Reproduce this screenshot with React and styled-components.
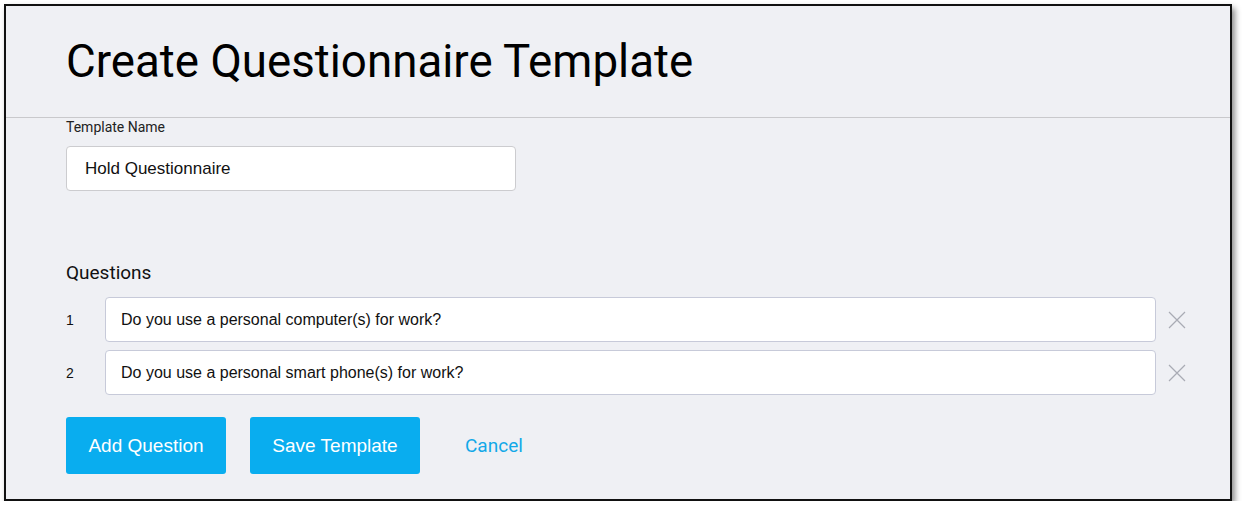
import React from 'react';
import styled, { createGlobalStyle } from 'styled-components';

const GlobalStyle = createGlobalStyle`
  html, body {
    margin: 0;
    padding: 0;
    background: #ffffff;
  }
  body {
    font-family: Roboto, "Liberation Sans", Arial, sans-serif;
  }
`;

const Page = styled.div`
  padding: 4px 0 0 4px;
`;

const Frame = styled.div`
  width: 1224px;
  height: 493px;
  border: 2px solid #111;
  background: #eff0f4;
  box-shadow: 3px 4px 6px rgba(0, 0, 0, 0.45);
  display: flex;
  flex-direction: column;
`;

const Header = styled.header`
  height: 111px;
  border-bottom: 1px solid #c9c9cc;
  display: flex;
  align-items: center;
  padding: 0 60px;
`;

const Title = styled.h1`
  margin: 0;
  font-family: Roboto, sans-serif;
  font-weight: 400;
  font-size: 45.7px;
  color: #000;
`;

const Body = styled.div`
  padding: 0 20px 0 60px;
  display: flex;
  flex-direction: column;
`;

const Label = styled.label`
  display: block;
  font-family: Roboto, sans-serif;
  font-size: 14px;
  color: #222;
  margin-top: 1px;
  line-height: 16px;
`;

const NameInput = styled.div`
  box-sizing: border-box;
  margin-top: 11px;
  width: 450px;
  height: 45px;
  border: 1px solid #cccccf;
  border-radius: 4px;
  background: #fff;
  display: flex;
  align-items: center;
  padding-left: 18px;
  font-family: "Liberation Sans", Arial, sans-serif;
  font-size: 17px;
  color: #111;
`;

const SectionTitle = styled.h2`
  margin: 71px 0 0;
  font-family: Roboto, sans-serif;
  font-weight: 400;
  font-size: 19px;
  line-height: 22px;
  color: #111;
`;

const QuestionList = styled.div`
  margin-top: 13px;
  display: flex;
  flex-direction: column;
  gap: 8px;
`;

const QuestionRow = styled.div`
  display: flex;
  align-items: center;
`;

const Number = styled.span`
  width: 39px;
  flex-shrink: 0;
  font-family: "Liberation Sans", Arial, sans-serif;
  font-size: 14px;
  color: #111;
`;

const QuestionInput = styled.div`
  box-sizing: border-box;
  flex-shrink: 0;
  width: 1051px;
  height: 45px;
  border: 1px solid #c7cad9;
  border-radius: 4px;
  background: #fff;
  display: flex;
  align-items: center;
  padding-left: 15px;
  font-family: "Liberation Sans", Arial, sans-serif;
  font-size: 16px;
  color: #111;
`;

const RemoveButton = styled.button`
  margin-left: 11px;
  flex-shrink: 0;
  width: 20px;
  height: 20px;
  padding: 0;
  border: none;
  background: none;
  display: flex;
  align-items: center;
  justify-content: center;
  cursor: pointer;
`;

const Actions = styled.div`
  margin-top: 22px;
  display: flex;
  align-items: center;
  gap: 24px;
`;

const PrimaryButton = styled.button`
  height: 57px;
  width: ${p => p.width}px;
  border: none;
  border-radius: 3px;
  background: #09adef;
  color: #fff;
  font-family: "Liberation Sans", Arial, sans-serif;
  font-size: 19px;
  cursor: pointer;
`;

const LinkButton = styled.button`
  margin-left: 21px;
  border: none;
  background: none;
  padding: 0;
  color: #12a8e8;
  font-family: Roboto, sans-serif;
  font-size: 19px;
  cursor: pointer;
`;

const CloseIcon = () => (
  <svg width="18" height="18" viewBox="0 0 18 18">
    <path d="M1 1 L17 17 M17 1 L1 17" stroke="#a9abb4" strokeWidth="1.2" fill="none" />
  </svg>
);

const questions = [
  'Do you use a personal computer(s) for work?',
  'Do you use a personal smart phone(s) for work?',
];

const App = () => (
  <Page>
    <GlobalStyle />
    <Frame>
      <Header>
        <Title>Create Questionnaire Template</Title>
      </Header>
      <Body>
        <Label>Template Name</Label>
        <NameInput>Hold Questionnaire</NameInput>
        <SectionTitle>Questions</SectionTitle>
        <QuestionList>
          {questions.map((q, i) => (
            <QuestionRow key={i}>
              <Number>{i + 1}</Number>
              <QuestionInput>{q}</QuestionInput>
              <RemoveButton aria-label="Remove question">
                <CloseIcon />
              </RemoveButton>
            </QuestionRow>
          ))}
        </QuestionList>
        <Actions>
          <PrimaryButton width={160}>Add Question</PrimaryButton>
          <PrimaryButton width={170}>Save Template</PrimaryButton>
          <LinkButton>Cancel</LinkButton>
        </Actions>
      </Body>
    </Frame>
  </Page>
);

export default App;
